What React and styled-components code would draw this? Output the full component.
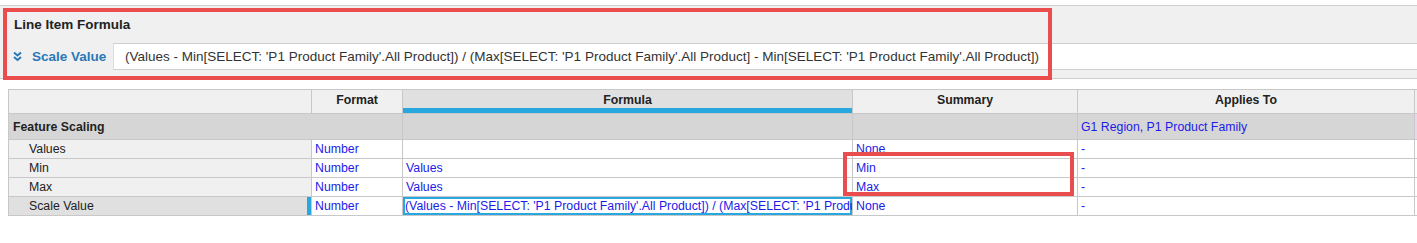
import React from 'react'
import styled, { createGlobalStyle } from 'styled-components'

const GlobalStyle = createGlobalStyle`
  body {
    margin: 0;
    background: #fff;
    font-family: "Liberation Sans", Arial, sans-serif;
  }
`

const Page = styled.div`
  position: relative;
  width: 1417px;
  height: 243px;
  padding-top: 5px;
  box-sizing: border-box;
  overflow: hidden;
`

const FormulaPanel = styled.div`
  border-top: 1px solid #cfcfcf;
  border-bottom: 1px solid #cfcfcf;
  background: #f0f0f0;
  height: 74px;
  box-sizing: border-box;
`

const PanelTitle = styled.div`
  height: 37px;
  padding-left: 14px;
  display: flex;
  align-items: center;
  font-size: 13.5px;
  font-weight: bold;
  color: #222;
`

const FormulaRow = styled.div`
  display: flex;
  height: 27px;
`

const ItemName = styled.div`
  width: 113px;
  display: flex;
  align-items: center;
  gap: 10px;
  padding-left: 13px;
  box-sizing: border-box;
  color: #2b78b6;
  font-size: 13.5px;
  font-weight: bold;
`

const FormulaField = styled.div`
  flex: 1;
  background: #fff;
  border-top: 1px solid #cfcfcf;
  border-bottom: 1px solid #cfcfcf;
  border-left: 1px solid #dcdcdc;
  display: flex;
  align-items: center;
  padding-left: 11px;
  font-size: 13.5px;
  color: #333;
  white-space: nowrap;
`

const Callout = styled.div`
  position: absolute;
  border: 4px solid #ea4d4d;
  box-sizing: border-box;
  pointer-events: none;
`

const Grid = styled.div`
  margin: 10px 0 0 8px;
  display: grid;
  grid-template-columns: 303px 91px 450px 225px 337px 8px;
  border-top: 1px solid #c8c8c8;
  border-left: 1px solid #c8c8c8;
  font-size: 12.3px;
`

const Cell = styled.div`
  position: relative;
  box-sizing: border-box;
  height: ${p => p.$h || 19}px;
  border-right: 1px solid #c8c8c8;
  border-bottom: 1px solid #c8c8c8;
  background: ${p => p.$bg || '#fff'};
  color: ${p => (p.$blue ? '#1c1ce8' : '#222')};
  display: flex;
  align-items: center;
  justify-content: ${p => (p.$center ? 'center' : 'flex-start')};
  padding-left: ${p => p.$pad ?? 3}px;
  font-weight: ${p => (p.$bold ? 'bold' : 'normal')};
  white-space: nowrap;
  overflow: hidden;
`

const HeadCell = styled(Cell)`
  align-items: flex-start;
  padding-top: 3px;
  ${p => p.$active && `box-shadow: inset 0 -5px 0 #29a8e0;`}
`

const LabelCell = styled(Cell)`
  padding-left: 20px;
  ${p => p.$marked && `box-shadow: inset -4px 0 0 #29a8e0;`}
`

const EditCell = styled(Cell)`
  box-shadow: inset 0 0 0 2px #29a8e0;
  padding-left: 2px;
`

const Chevrons = () => (
  <svg width="9" height="11" viewBox="0 0 9 11">
    <path d="M1 1.5 L4.5 4.5 L8 1.5 M1 6 L4.5 9 L8 6" fill="none" stroke="#2b78b6" strokeWidth="2" />
  </svg>
)

const rows = [
  { name: 'Values', formula: '', summary: 'None' },
  { name: 'Min', formula: 'Values', summary: 'Min' },
  { name: 'Max', formula: 'Values', summary: 'Max' },
]

const formula =
  "(Values - Min[SELECT: 'P1 Product Family'.All Product]) / (Max[SELECT: 'P1 Product Family'.All Product] - Min[SELECT: 'P1 Product Family'.All Product])"

const App = () => (
  <Page>
    <GlobalStyle />
    <FormulaPanel>
      <PanelTitle>Line Item Formula</PanelTitle>
      <FormulaRow>
        <ItemName>
          <Chevrons />
          Scale Value
        </ItemName>
        <FormulaField>{formula}</FormulaField>
      </FormulaRow>
    </FormulaPanel>

    <Grid>
      <HeadCell $h={24} $bg="#f0f0f0" />
      <HeadCell $h={24} $bg="#f0f0f0" $center $bold $pad={0}>Format</HeadCell>
      <HeadCell $h={24} $bg="#e0e0e0" $center $bold $pad={0} $active>Formula</HeadCell>
      <HeadCell $h={24} $bg="#f0f0f0" $center $bold $pad={0}>Summary</HeadCell>
      <HeadCell $h={24} $bg="#f0f0f0" $center $bold $pad={0}>Applies To</HeadCell>
      <HeadCell $h={24} $bg="#f0f0f0" />

      <Cell $h={26} $bg="#d6d6d6" $bold $pad={4} style={{ gridColumn: 'span 2' }}>Feature Scaling</Cell>
      <Cell $h={26} $bg="#d6d6d6" />
      <Cell $h={26} $bg="#d6d6d6" />
      <Cell $h={26} $bg="#d6d6d6" $blue>G1 Region, P1 Product Family</Cell>
      <Cell $h={26} $bg="#e8d8ec" />

      {rows.map(r => (
        <React.Fragment key={r.name}>
          <LabelCell $bg="#f0f0f0">{r.name}</LabelCell>
          <Cell $blue>Number</Cell>
          <Cell $blue>{r.formula}</Cell>
          <Cell $blue>{r.summary}</Cell>
          <Cell $blue>-</Cell>
          <Cell />
        </React.Fragment>
      ))}

      <LabelCell $bg="#e0e0e0" $marked>Scale Value</LabelCell>
      <Cell $blue>Number</Cell>
      <EditCell $blue>{formula}</EditCell>
      <Cell $blue>None</Cell>
      <Cell $blue>-</Cell>
      <Cell />
    </Grid>

    <Callout style={{ left: 3, top: 8, width: 1049, height: 72 }} />
    <Callout style={{ left: 843, top: 152, width: 231, height: 44 }} />
  </Page>
)

export default App
